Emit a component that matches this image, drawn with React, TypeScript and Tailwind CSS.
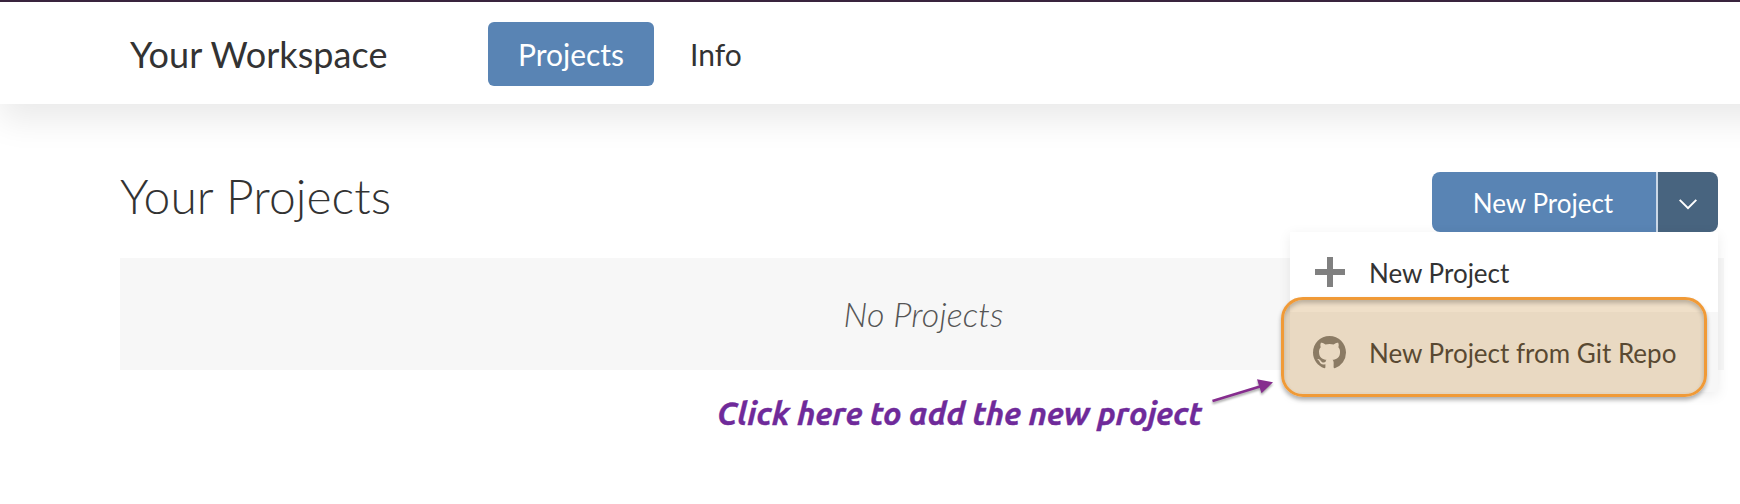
import type { ReactNode } from "react";

function PlusIcon() {
  return (
    <svg viewBox="0 0 30 30" className="h-[30px] w-[30px] fill-[#808080]">
      <path d="M12 0h6v12h12v6H18v12h-6V18H0v-6h12z" />
    </svg>
  );
}

function GitHubIcon() {
  return (
    <svg viewBox="0 0 16 16" className="mr-px mt-px h-[33px] w-[33px] fill-[#777]">
      <path d="M8 0C3.58 0 0 3.58 0 8c0 3.54 2.29 6.53 5.47 7.59.4.07.55-.17.55-.38 0-.19-.01-.82-.01-1.49-2.01.37-2.53-.49-2.69-.94-.09-.23-.48-.94-.82-1.13-.28-.15-.68-.52-.01-.53.63-.01 1.08.58 1.23.82.72 1.21 1.87.87 2.33.66.07-.52.28-.87.51-1.07-1.78-.2-3.64-.89-3.64-3.95 0-.87.31-1.59.82-2.15-.08-.2-.36-1.02.08-2.12 0 0 .67-.21 2.2.82.64-.18 1.32-.27 2-.27s1.36.09 2 .27c1.53-1.04 2.2-.82 2.2-.82.44 1.1.16 1.92.08 2.12.51.56.82 1.27.82 2.15 0 3.07-1.87 3.75-3.65 3.95.29.25.54.73.54 1.48 0 1.07-.01 1.93-.01 2.2 0 .21.15.46.55.38A8.01 8.01 0 0 0 16 8c0-4.42-3.58-8-8-8z" />
    </svg>
  );
}

function MenuItem({ icon, label, active }: { icon: ReactNode; label: string; active?: boolean }) {
  return (
    <button
      className={
        active
          ? "flex h-20 w-full items-center bg-[#f7f7f7] pl-[22px] text-left"
          : "flex h-20 w-full items-center bg-white pl-[22px] text-left"
      }
    >
      <span className="flex w-9 justify-center">{icon}</span>
      <span className="ml-[21px] whitespace-nowrap pt-px text-[26px] leading-none text-[#333]">{label}</span>
    </button>
  );
}

export default function App() {
  return (
    <div className="relative h-[504px] w-[1740px] overflow-hidden bg-white font-['Lato',sans-serif] text-[#333]">
      <header className="flex h-[104px] w-[1800px] items-center border-t-2 border-[#39243e] bg-white pl-[130px] shadow-[0_16px_32px_rgba(0,0,0,0.085)]">
        <h1 className="w-[358px] pt-0.5 text-4xl leading-none tracking-[0.06px]">Your Workspace</h1>
        <nav className="flex items-center gap-9 pt-0.5 text-[30px] leading-none">
          <a className="flex h-16 w-[166px] items-center justify-center rounded-md bg-[#5984b4] text-white">Projects</a>
          <a>Info</a>
        </nav>
      </header>

      <main className="pl-[120px]">
        <div className="flex h-[154px] items-start justify-between pr-[22px] pt-[68px]">
          <h2 className="text-5xl font-light leading-none tracking-[0.06px]">Your Projects</h2>
          <div className="relative flex h-[60px] w-[286px]">
            <button className="flex w-56 items-center justify-center rounded-l-lg bg-[#5984b4] pr-0.5 pt-px text-[26px] leading-none text-white">
              New Project
            </button>
            <button className="flex flex-1 items-center justify-center rounded-r-lg border-l-2 border-[#cbd8e7] bg-[#48647f]">
              <svg viewBox="0 0 18 11" className="mt-1 h-[11px] w-[18px] fill-none stroke-white stroke-2">
                <path d="M.7.9 9 9.2 17.3.9" />
              </svg>
            </button>
            <div className="absolute right-0 top-[60px] w-[428px] shadow-[0_3px_12px_rgba(0,0,0,0.08)]">
              <MenuItem icon={<PlusIcon />} label="New Project" />
              <MenuItem icon={<GitHubIcon />} label="New Project from Git Repo" active />
              <div className="absolute left-[-9px] top-[65px] h-[100px] w-[426px] rounded-[22px] border-[3px] border-[#f09a37] bg-[rgba(194,134,50,0.265)] shadow-[0_3px_4px_rgba(0,0,0,0.3),inset_0_3px_4px_rgba(0,0,0,0.22)]" />
            </div>
          </div>
        </div>
        <div className="flex h-28 w-[1604px] items-center justify-center bg-[#f7f7f7] pl-[3px] text-[34px] font-light italic leading-none tracking-[0.15px] text-[#555]">
          No Projects
        </div>
      </main>

      <p className="absolute left-[717px] top-[395px] whitespace-nowrap font-['Ubuntu','Noto_Sans',sans-serif] text-[32px] font-bold italic leading-9 tracking-[-0.07px] text-[#6f2a9a] [-webkit-text-stroke:0.4px_#6f2a9a]">
        Click here to add the new project
      </p>
      <svg viewBox="0 0 80 40" className="absolute left-[1204px] top-[370px] h-10 w-20 drop-shadow-[0_2px_1px_rgba(0,0,0,0.35)]">
        <path d="M8.500 31 56 16.500" className="stroke-[#862d8e] stroke-[2.8]" />
        <path d="m53 9.200 16 3-11.500 11z" className="fill-[#862d8e]" />
      </svg>
    </div>
  );
}
